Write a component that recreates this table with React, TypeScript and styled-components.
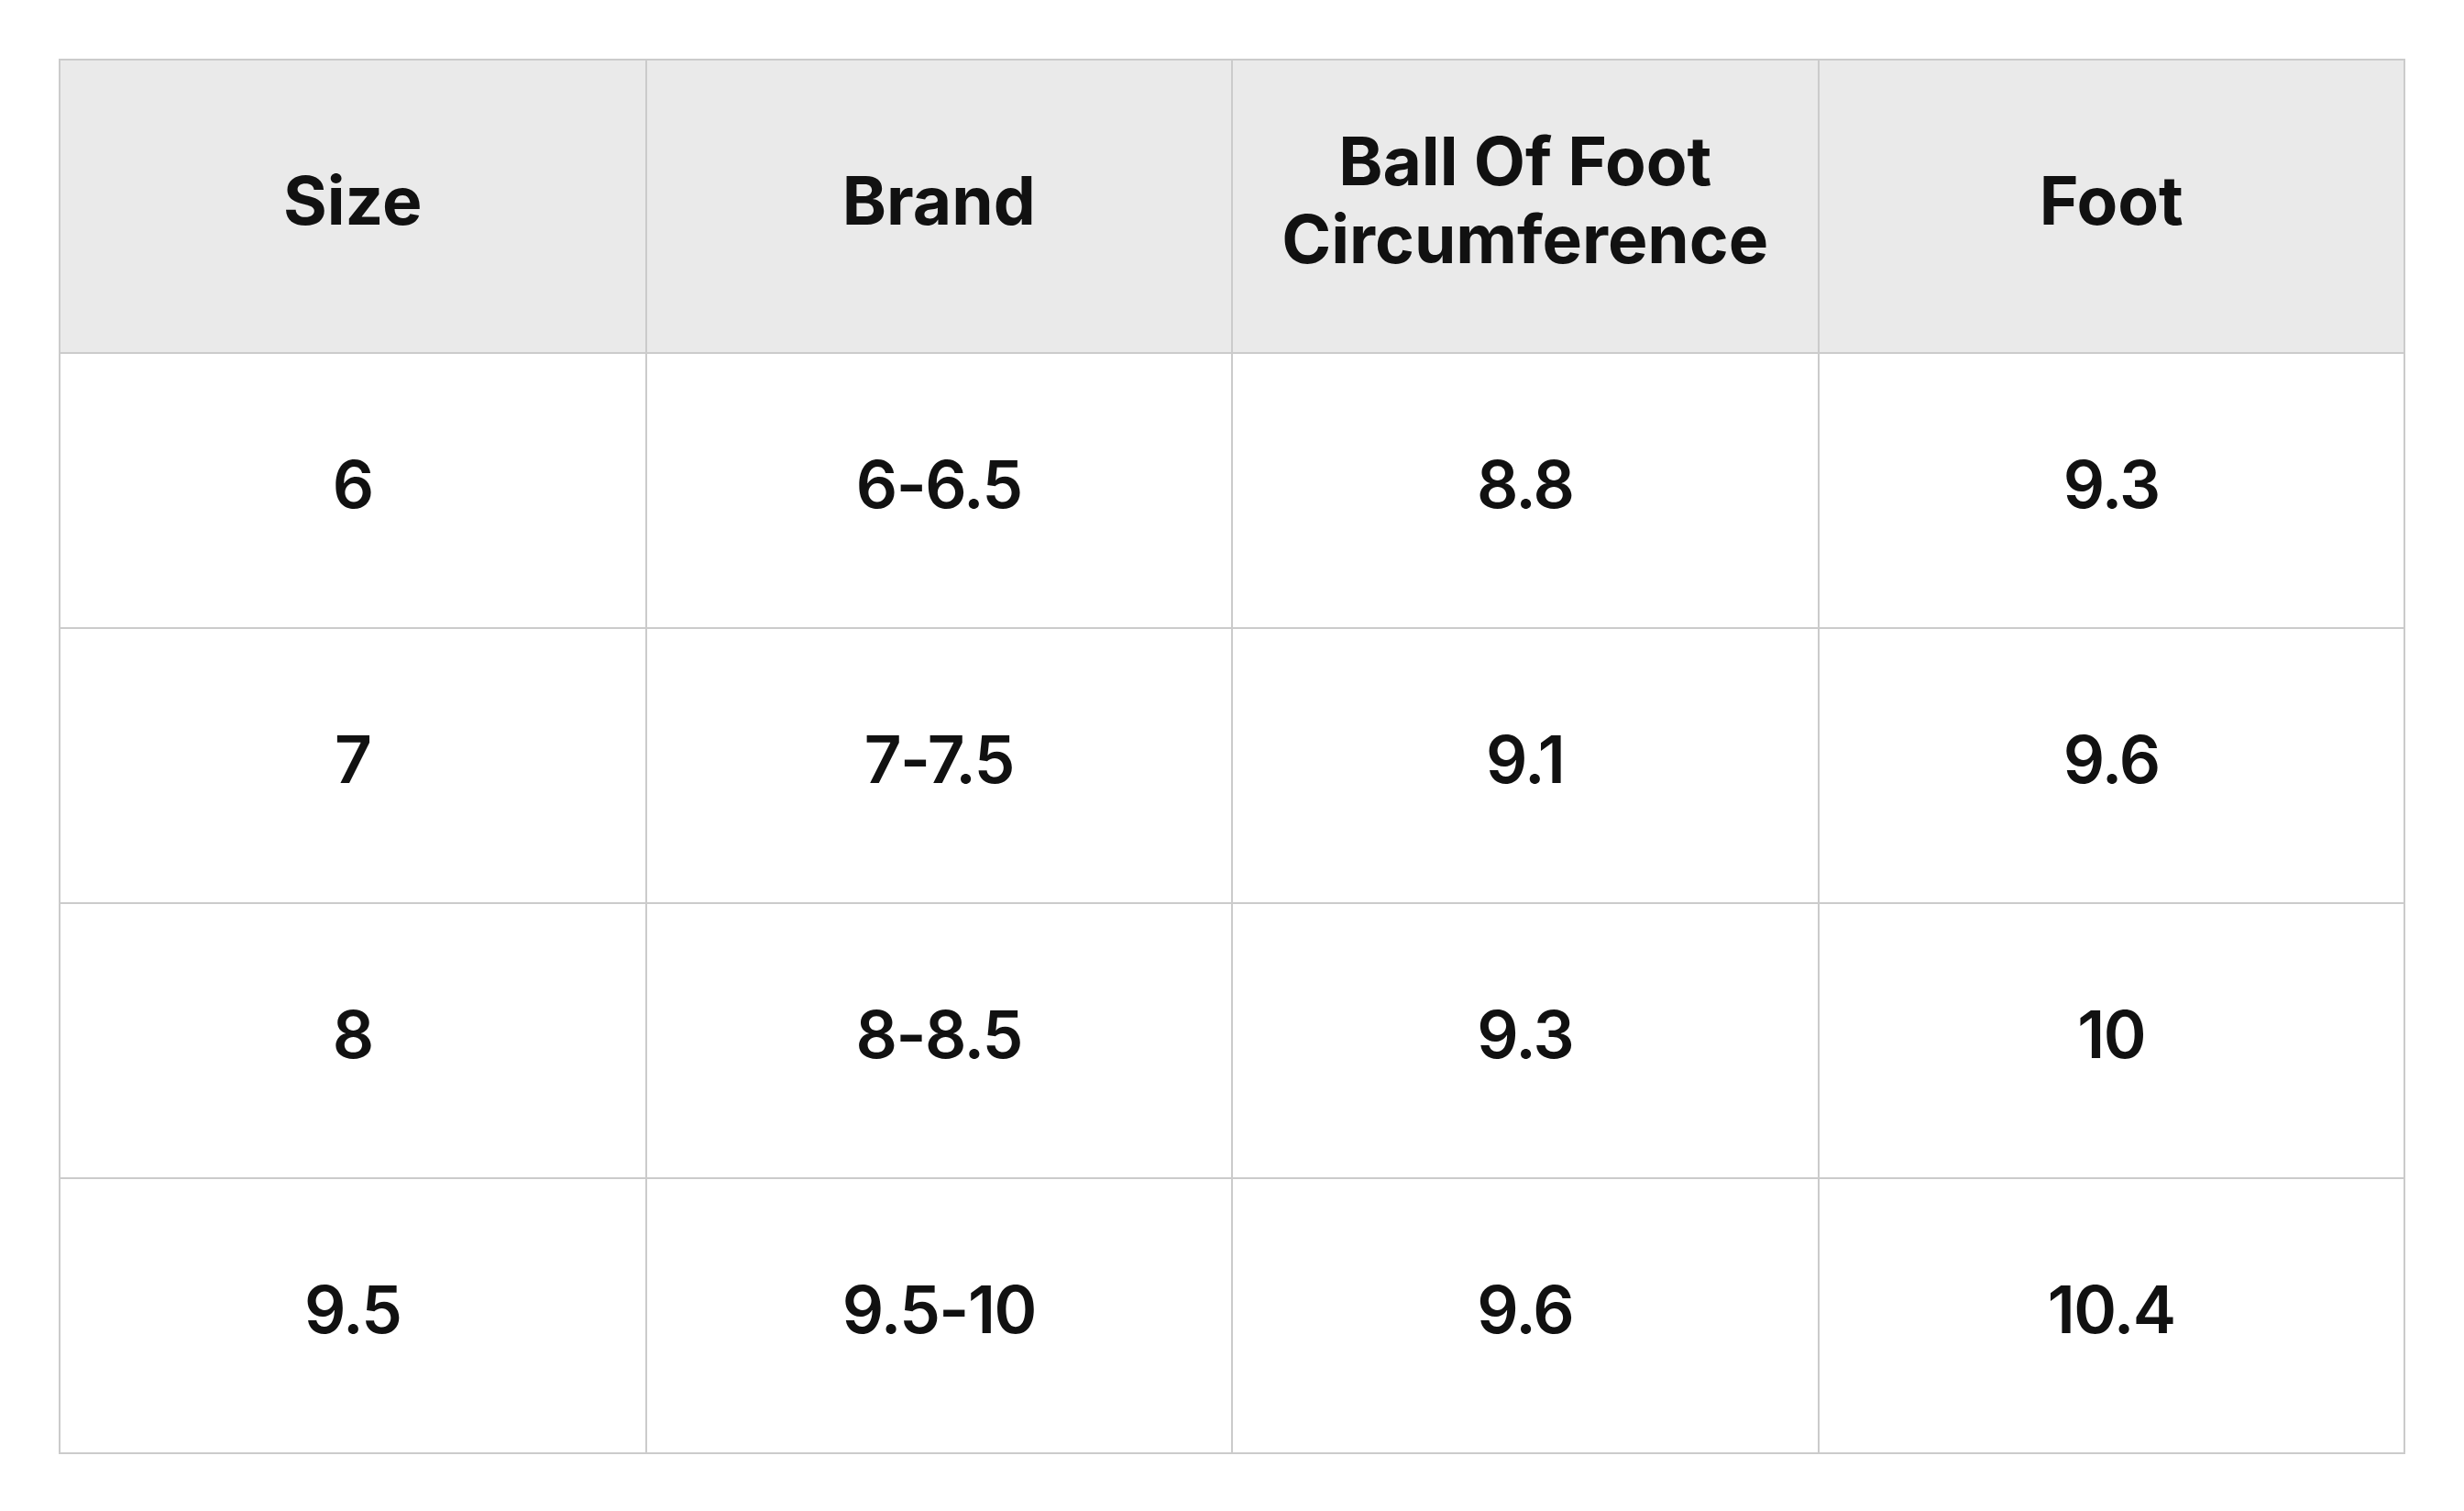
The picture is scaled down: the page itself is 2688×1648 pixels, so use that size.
import styled, { createGlobalStyle } from 'styled-components';

const GlobalStyle = createGlobalStyle`
  html, body {
    margin: 0;
    padding: 0;
    background: #ffffff;
  }
  body {
    font-family: Inter, "Noto Sans", "Liberation Sans", sans-serif;
    color: #111111;
  }
`;

const Page = styled.div`
  padding: 64px;
  width: 2560px;
`;

const Table = styled.table`
  width: 2560px;
  table-layout: fixed;
  border-collapse: separate;
  border-spacing: 0;
  border-top: 2px solid #cbcbcb;
  border-left: 2px solid #cbcbcb;
`;

const HeadCell = styled.th`
  height: 306px;
  padding: 0 40px 12px;
  background: #eaeaea;
  border-right: 2px solid #cbcbcb;
  border-bottom: 2px solid #cbcbcb;
  font-size: 73px;
  font-weight: 700;
  line-height: 1.16;
  text-align: center;
  vertical-align: middle;
`;

const Cell = styled.td`
  height: 284px;
  padding: 0 0 14px;
  border-right: 2px solid #cbcbcb;
  border-bottom: 2px solid #cbcbcb;
  font-size: 71px;
  font-weight: 600;
  letter-spacing: -1.5px;
  text-align: center;
  vertical-align: middle;
`;

const columns = ['Size', 'Brand', 'Ball Of Foot Circumference', 'Foot'];

const rows = [
  ['6', '6-6.5', '8.8', '9.3'],
  ['7', '7-7.5', '9.1', '9.6'],
  ['8', '8-8.5', '9.3', '10'],
  ['9.5', '9.5-10', '9.6', '10.4'],
];

function App() {
  return (
    <Page>
      <GlobalStyle />
      <Table>
        <thead>
          <tr>
            {columns.map((col) => (
              <HeadCell key={col}>{col}</HeadCell>
            ))}
          </tr>
        </thead>
        <tbody>
          {rows.map((row) => (
            <tr key={row[0]}>
              {row.map((value, i) => (
                <Cell key={i}>{value}</Cell>
              ))}
            </tr>
          ))}
        </tbody>
      </Table>
    </Page>
  );
}

export default App;
